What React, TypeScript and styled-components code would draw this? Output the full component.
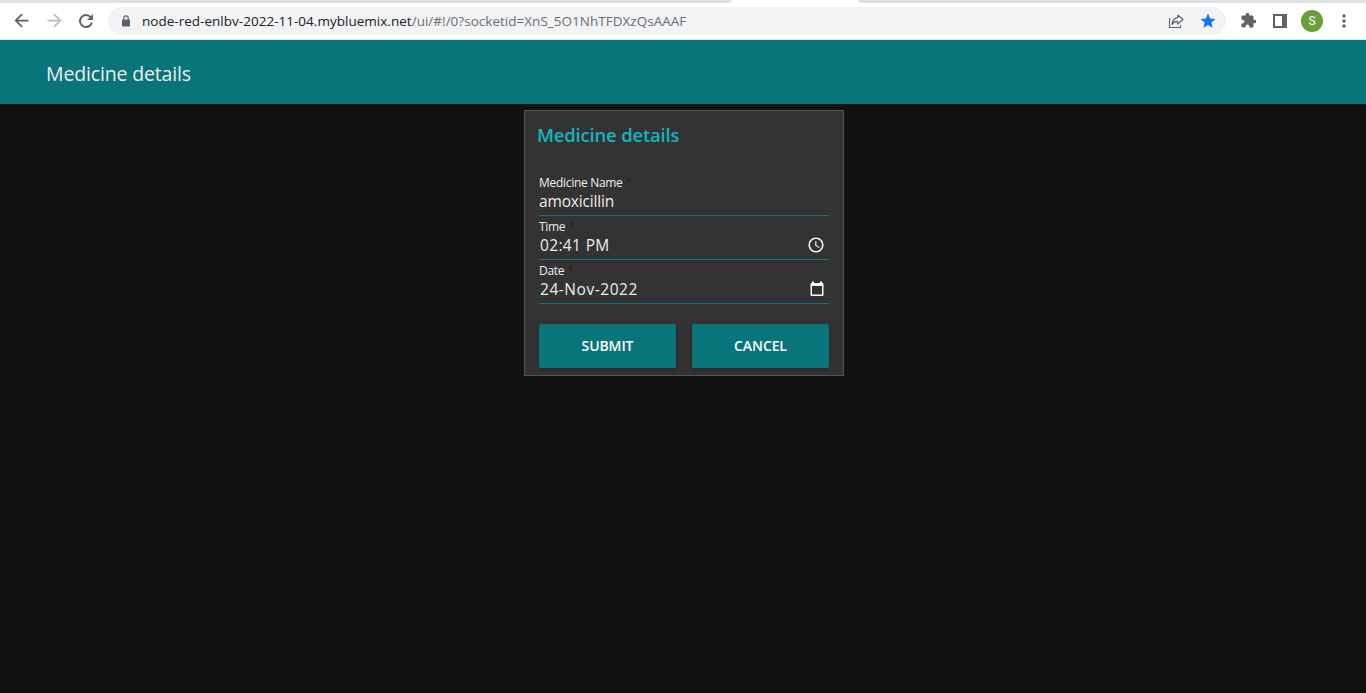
import React from 'react';
import styled, { createGlobalStyle } from 'styled-components';
import { MdArrowBack, MdArrowForward, MdStar, MdExtension, MdMoreVert, MdAccessTime } from 'react-icons/md';

const GlobalStyle = createGlobalStyle`
  * { box-sizing: border-box; }
  body { margin: 0; background: #111; font-family: "Open Sans", "Noto Sans", sans-serif; }
`;

const Page = styled.div`
  display: flex;
  flex-direction: column;
  height: 693px;
  overflow: hidden;
  background: #111;
`;

const TabStrip = styled.div`
  display: flex;
  justify-content: space-between;
  height: 3px;
  background: #fff;
`;

const InactiveTabs = styled.div<{ $width: number; $side: 'left' | 'right' }>`
  width: ${p => p.$width}px;
  background: #dee1e6;
  border-radius: ${p => (p.$side === 'left' ? '0 0 6px 0' : '0 0 0 6px')};
`;

const Toolbar = styled.div`
  display: flex;
  align-items: center;
  height: 37px;
  padding: 0 6px 1px 5px;
  background: #fff;
  border-bottom: 1px solid #dfe1e3;
`;

const IconSlot = styled.div<{ $color?: string; $width?: number }>`
  display: flex;
  align-items: center;
  justify-content: center;
  flex: none;
  width: ${p => p.$width ?? 32}px;
  height: 28px;
  color: ${p => p.$color ?? '#5f6368'};
  svg { display: block; flex: none; }
`;

const AddressBar = styled.div`
  display: flex;
  align-items: center;
  width: 1118px;
  height: 28px;
  margin: 0 6px;
  padding: 0 2px 0 10px;
  border-radius: 14px;
  background: #f1f3f4;
`;

const Url = styled.div`
  flex: 1;
  margin-left: 8px;
  font-size: 13.5px;
  line-height: 28px;
  letter-spacing: 0.02px;
  white-space: nowrap;
  color: #6a6e73;
`;

const Host = styled.span`
  color: #202124;
`;

const Avatar = styled.div`
  width: 22px;
  height: 22px;
  border-radius: 50%;
  background: #689f38;
  color: #fff;
  font: 12px/22px Roboto, sans-serif;
  text-align: center;
`;

const Header = styled.header`
  display: flex;
  align-items: center;
  flex: none;
  height: 64px;
  padding: 2px 46px 0;
  background: #097479;
`;

const HeaderTitle = styled.h1`
  margin: 0;
  font-size: 19.5px;
  font-weight: 450;
  letter-spacing: -0.15px;
  color: #eee;
`;

const Main = styled.main`
  display: flex;
  flex: 1;
  justify-content: center;
  align-items: flex-start;
  padding: 6px 0 0 2px;
`;

const Card = styled.form`
  width: 320px;
  height: 266px;
  padding: 0 14px;
  background: #333;
  border: 1px solid #555;
`;

const CardTitle = styled.h2`
  height: 61px;
  margin: 0 0 0 -2px;
  padding-top: 12px;
  font-size: 18.5px;
  line-height: 24px;
  font-weight: 600;
  letter-spacing: -0.2px;
  color: #11b5bf;
`;

const Field = styled.div`
  display: flex;
  flex-direction: column;
  height: 44px;
  border-bottom: 1px solid #097479;
`;

const Label = styled.label`
  height: 20px;
  padding-top: 3px;
  font-size: 12px;
  line-height: 16px;
  font-weight: 500;
  letter-spacing: -0.3px;
  color: #eee;
`;

const Required = styled.span`
  margin-left: 3px;
  color: #222;
`;

const Value = styled.div`
  display: flex;
  justify-content: space-between;
  height: 19px;
  line-height: 19px;
  font-size: 15.5px;
  color: #eee;
`;

const ValueText = styled.span<{ $spacing: number; $indent?: number }>`
  margin-left: ${p => p.$indent ?? 0}px;
  letter-spacing: ${p => p.$spacing}px;
  white-space: pre;
`;

const PickerIcon = styled.span<{ $height?: number }>`
  display: flex;
  align-items: center;
  height: ${p => p.$height ?? 18}px;
  margin-right: 4px;
  color: #fff;
`;

const Actions = styled.div`
  display: flex;
  gap: 16px;
  margin-top: 20px;
`;

const Button = styled.button`
  flex: 1;
  height: 44px;
  padding: 0 0 2px;
  border: 0;
  border-radius: 2px;
  background: #097479;
  color: #fff;
  font-family: inherit;
  font-size: 14px;
  font-weight: 600;
  letter-spacing: -0.1px;
  box-shadow: 0 2px 5px rgba(0, 0, 0, 0.26);
`;

const ReloadIcon = () => (
  <svg width="16" height="16" viewBox="0 0 16 16" fill="none">
    <path d="M12.6 4.2A6 6 0 1 0 13.8 9.6" stroke="currentColor" strokeWidth="2" />
    <path d="M15 1V7H9Z" fill="currentColor" />
  </svg>
);

const LockIcon = () => (
  <svg width="10" height="12" viewBox="0 0 10 12" fill="currentColor">
    <rect x="1" y="4.5" width="8" height="7" rx="0.8" />
    <path d="M2.7 5V3.2A2.3 2.3 0 0 1 7.3 3.2V5" fill="none" stroke="currentColor" strokeWidth="1.2" />
  </svg>
);

const ShareIcon = () => (
  <svg width="16" height="16" viewBox="0 0 16 16" fill="none" stroke="currentColor" strokeWidth="1.1">
    <path d="M1.5 5V14.5H12.5V12.3" />
    <path d="M9.8 2L15 6.5L9.8 11V8.4C7.2 8.2 5.4 9.2 4 11.6C4.3 7.6 6.2 5.1 9.8 4.6Z" strokeLinejoin="round" />
  </svg>
);

const SidePanelIcon = () => (
  <svg width="14" height="14" viewBox="0 0 14 14" fill="currentColor">
    <path fillRule="evenodd" d="M0 0H14V14H0ZM2 2V12H9V2Z" />
  </svg>
);

const CalendarIcon = () => (
  <svg width="16" height="16" viewBox="0 0 16 16" fill="currentColor">
    <path fillRule="evenodd" d="M3 .5H5V2H11V.5H13V2H13.5Q14.5 2 14.5 3V14Q14.5 15 13.5 15H2.5Q1.5 15 1.5 14V3Q1.5 2 2.5 2H3ZM3 5V13.6H13V5Z" />
  </svg>
);

export default function App() {
  return (
    <Page>
      <GlobalStyle />
      <TabStrip>
        <InactiveTabs $width={732} $side="left" />
        <InactiveTabs $width={508} $side="right" />
      </TabStrip>
      <Toolbar>
        <IconSlot $width={33}><MdArrowBack size={21} /></IconSlot>
        <IconSlot $color="#babcbe"><MdArrowForward size={21} /></IconSlot>
        <IconSlot><ReloadIcon /></IconSlot>
        <AddressBar>
          <IconSlot $width={16}><LockIcon /></IconSlot>
          <Url><Host>node-red-enlbv-2022-11-04.mybluemix.net</Host>/ui/#!/0?socketid=XnS_5O1NhTFDXzQsAAAF</Url>
          <IconSlot><ShareIcon /></IconSlot>
          <IconSlot $color="#1a73e8"><MdStar size={18} /></IconSlot>
        </AddressBar>
        <IconSlot><MdExtension size={17} /></IconSlot>
        <IconSlot><SidePanelIcon /></IconSlot>
        <IconSlot><Avatar>S</Avatar></IconSlot>
        <IconSlot><MdMoreVert size={20} /></IconSlot>
      </Toolbar>
      <Header><HeaderTitle>Medicine details</HeaderTitle></Header>
      <Main>
        <Card>
          <CardTitle>Medicine details</CardTitle>
          <Field>
            <Label>Medicine Name<Required>*</Required></Label>
            <Value><ValueText $spacing={-0.16}>amoxicillin</ValueText></Value>
          </Field>
          <Field>
            <Label>Time<Required>*</Required></Label>
            <Value>
              <ValueText $spacing={0.35} $indent={1}>02:41 PM</ValueText>
              <PickerIcon $height={17}><MdAccessTime size={18} /></PickerIcon>
            </Value>
          </Field>
          <Field>
            <Label>Date<Required>*</Required></Label>
            <Value>
              <ValueText $spacing={0.55} $indent={1}>24-Nov-2022</ValueText>
              <PickerIcon><CalendarIcon /></PickerIcon>
            </Value>
          </Field>
          <Actions>
            <Button type="button">SUBMIT</Button>
            <Button type="button">CANCEL</Button>
          </Actions>
        </Card>
      </Main>
    </Page>
  );
}
